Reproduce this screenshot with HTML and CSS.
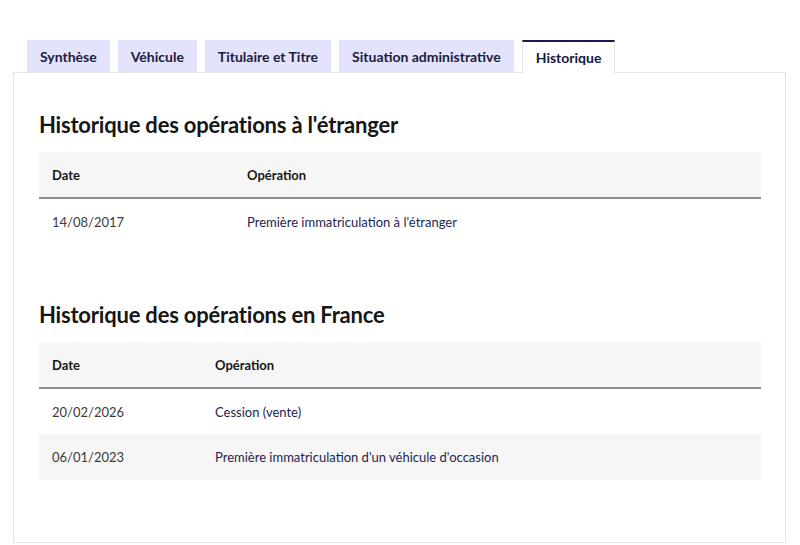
FILE: index.html
```html
<!DOCTYPE html>
<html lang="fr">
<head>
<meta charset="utf-8">
<title>Historique</title>
<link rel="stylesheet" href="styles.css">
</head>
<body>
<div class="tabs">
  <ul class="tab-list">
    <li class="tab">Synthèse</li>
    <li class="tab">Véhicule</li>
    <li class="tab">Titulaire et Titre</li>
    <li class="tab">Situation administrative</li>
    <li class="tab active">Historique</li>
  </ul>
  <div class="panel">
    <h2 class="title">Historique des opérations à l'étranger</h2>
    <table class="table t1">
      <thead>
        <tr><th class="col-date">Date</th><th>Opération</th></tr>
      </thead>
      <tbody>
        <tr><td class="date">14/08/2017</td><td class="op">Première immatriculation à l'étranger</td></tr>
      </tbody>
    </table>
    <h2 class="title second">Historique des opérations en France</h2>
    <table class="table t2">
      <thead>
        <tr><th class="col-date">Date</th><th>Opération</th></tr>
      </thead>
      <tbody>
        <tr><td class="date">20/02/2026</td><td class="op">Cession (vente)</td></tr>
        <tr class="alt"><td class="date">06/01/2023</td><td class="op">Première immatriculation d'un véhicule d'occasion</td></tr>
      </tbody>
    </table>
  </div>
</div>
</body>
</html>
```
FILE: styles.css
```css
* { box-sizing: border-box; }
html, body { margin: 0; padding: 0; background: #fff; }
body {
  font-family: "Lato", "Noto Sans", sans-serif;
  color: #161616;
  width: 800px;
  height: 545px;
  overflow: hidden;
}
.tabs { padding-top: 40px; }
.tab-list {
  list-style: none;
  margin: 0;
  padding: 0 0 0 27px;
  display: flex;
  gap: 8px;
  align-items: flex-end;
}
.tab {
  height: 32px;
  padding: 0 13px;
  display: flex;
  align-items: center;
  background: #e3e3fd;
  font-size: 14px;
  font-weight: 700;
  color: #1c1c3c;
}
.tab.active {
  background: #fff;
  border-top: 2px solid #1b1b4f;
  border-left: 1px solid #e5e5e5;
  border-right: 1px solid #e5e5e5;
  color: #161640;
  margin-bottom: -1px;
  height: 33px;
  padding: 0 13px 1px;
  position: relative;
  z-index: 1;
}
.panel {
  margin: 0 14px 0 13px;
  border: 1px solid #e5e5e5;
  padding: 38px 24px 61px 25px;
  height: 471px;
}
.title {
  margin: 0 0 13px;
  font-size: 22px;
  line-height: 28px;
  font-weight: 700;
  letter-spacing: -0.2px;
  color: #161616;
}
.title.second { margin-top: 57px; }
.table {
  width: 100%;
  border-collapse: collapse;
  font-size: 13px;
}
.table th {
  background: #f6f6f6;
  text-align: left;
  font-weight: 700;
  height: 46px;
  padding: 0 13px;
  border-bottom: 2px solid #8f8f8f;
  color: #161616;
}
.table td {
  height: 46px;
  padding: 0 13px;
}
.t1 .col-date { width: 195px; }
.t2 .col-date { width: 163px; }
.date { color: #3a3a3a; }
.op { color: #1e1e4e; }
.alt td { background: #f6f6f6; }
```
